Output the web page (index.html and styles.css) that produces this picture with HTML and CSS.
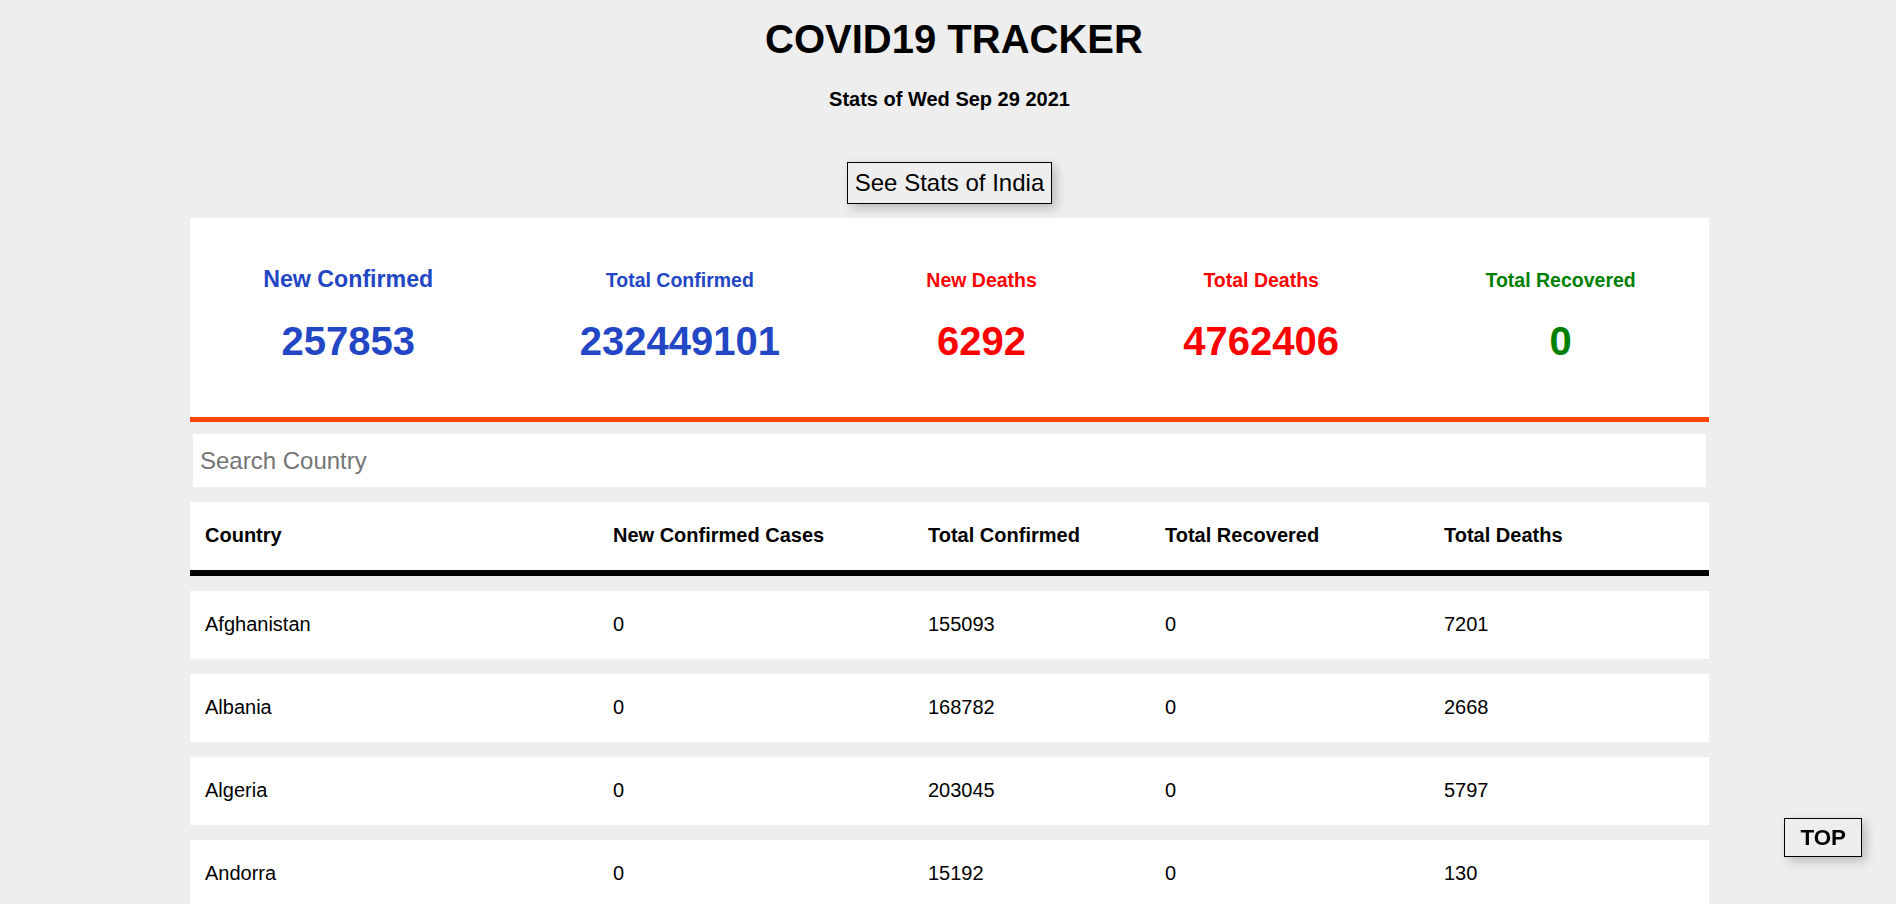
FILE: index.html
```html
<!DOCTYPE html>
<html lang="en">
<head>
<meta charset="utf-8">
<title>COVID19 TRACKER</title>
<link rel="stylesheet" href="styles.css">
</head>
<body>
<header class="page-head">
  <h1 class="title">COVID19 TRACKER</h1>
  <h3 class="subtitle">Stats of Wed Sep 29 2021</h3>
  <button class="india-btn" type="button">See Stats of India</button>
</header>
<main class="wrap">
  <section class="stats-card">
    <div class="stat blue">
      <div class="stat-label big">New Confirmed</div>
      <div class="stat-value">257853</div>
    </div>
    <div class="stat blue">
      <div class="stat-label">Total Confirmed</div>
      <div class="stat-value">232449101</div>
    </div>
    <div class="stat red">
      <div class="stat-label">New Deaths</div>
      <div class="stat-value">6292</div>
    </div>
    <div class="stat red">
      <div class="stat-label">Total Deaths</div>
      <div class="stat-value">4762406</div>
    </div>
    <div class="stat green">
      <div class="stat-label">Total Recovered</div>
      <div class="stat-value">0</div>
    </div>
  </section>
  <input class="search" type="text" placeholder="Search Country">
  <table class="country-table">
    <colgroup>
      <col class="c1"><col class="c2"><col class="c3"><col class="c4"><col class="c5">
    </colgroup>
    <thead>
      <tr><th>Country</th><th>New Confirmed Cases</th><th>Total Confirmed</th><th>Total Recovered</th><th>Total Deaths</th></tr>
    </thead>
    <tbody>
      <tr><td>Afghanistan</td><td>0</td><td>155093</td><td>0</td><td>7201</td></tr>
      <tr><td>Albania</td><td>0</td><td>168782</td><td>0</td><td>2668</td></tr>
      <tr><td>Algeria</td><td>0</td><td>203045</td><td>0</td><td>5797</td></tr>
      <tr><td>Andorra</td><td>0</td><td>15192</td><td>0</td><td>130</td></tr>
      <tr><td>Angola</td><td>0</td><td>55583</td><td>0</td><td>1515</td></tr>
      <tr><td>Antigua and Barbuda</td><td>0</td><td>3336</td><td>0</td><td>82</td></tr>
      <tr><td>Argentina</td><td>0</td><td>5249841</td><td>0</td><td>114828</td></tr>
      <tr><td>Armenia</td><td>0</td><td>263887</td><td>0</td><td>5368</td></tr>
    </tbody>
  </table>
</main>
<button class="top-btn" type="button">TOP</button>
</body>
</html>
```
FILE: styles.css
```css
html, body {
  margin: 0;
  padding: 0;
}
body {
  background: #eeeeee;
  font-family: "Liberation Sans", Arial, sans-serif;
  color: #000;
}
.page-head {
  display: flex;
  flex-direction: column;
  align-items: center;
  padding-left: 3px;
}
.title {
  margin: 16px 0 0;
  font-size: 40px;
  font-weight: bold;
  line-height: 46px;
  padding-left: 9px;
}
.subtitle {
  margin: 26px 0 0;
  font-size: 20px;
  font-weight: bold;
  line-height: 23px;
}
.india-btn {
  margin-top: 51px;
  font-family: "Liberation Sans", Arial, sans-serif;
  font-size: 24px;
  line-height: 28px;
  padding: 6px 7px;
  border: 1px solid #000;
  background: #eeeeee;
  color: #000;
  box-shadow: 4px 4px 10px rgba(0, 0, 0, 0.22);
}
.wrap {
  width: 1519px;
  margin: 14px 0 0 calc(50% - 758px);
}
.stats-card {
  background: #fff;
  border-bottom: 5px solid #ff4500;
  display: flex;
  justify-content: space-around;
  padding: 47px 0 53px;
}
.stat {
  display: flex;
  flex-direction: column;
  align-items: center;
  text-align: center;
}
.stat-label {
  font-size: 19.5px;
  font-weight: bold;
  line-height: 30px;
}
.stat-label.big {
  font-size: 23.2px;
  line-height: 27.4px;
  margin-top: 1px;
  margin-bottom: 1.6px;
}
.stat-value {
  margin-top: 23px;
  font-size: 40px;
  font-weight: bold;
  line-height: 46px;
}
.blue { color: #2346c4; }
.red { color: #ff0000; }
.green { color: #008000; }
.search {
  display: block;
  box-sizing: border-box;
  width: calc(100% - 6px);
  height: 53px;
  margin: 12px 3px 0;
  padding: 0 7px;
  border: none;
  outline: none;
  background: #fff;
  font-family: "Liberation Sans", Arial, sans-serif;
  font-size: 24px;
  color: #000;
}
.search::placeholder {
  color: #757575;
}
.country-table {
  width: 100%;
  table-layout: fixed;
  border-collapse: separate;
  border-spacing: 0 15px;
  font-size: 20px;
  line-height: 23px;
}
.c1 { width: 408px; }
.c2 { width: 315px; }
.c3 { width: 237px; }
.c4 { width: 279px; }
.c5 { width: 280px; }
.country-table th,
.country-table td {
  background: #fff;
  text-align: left;
  padding: 21.5px 0 23.5px 15px;
  white-space: nowrap;
}
.country-table th {
  font-weight: bold;
  border-bottom: 6px solid #000;
}
.top-btn {
  position: fixed;
  right: 34px;
  bottom: 47px;
  font-family: "Liberation Sans", Arial, sans-serif;
  font-size: 22.4px;
  font-weight: bold;
  line-height: 26px;
  padding: 5.5px 15px;
  border: 1px solid #000;
  background: #eeeeee;
  color: #000;
  box-shadow: 4px 4px 10px rgba(0, 0, 0, 0.22);
}
```
